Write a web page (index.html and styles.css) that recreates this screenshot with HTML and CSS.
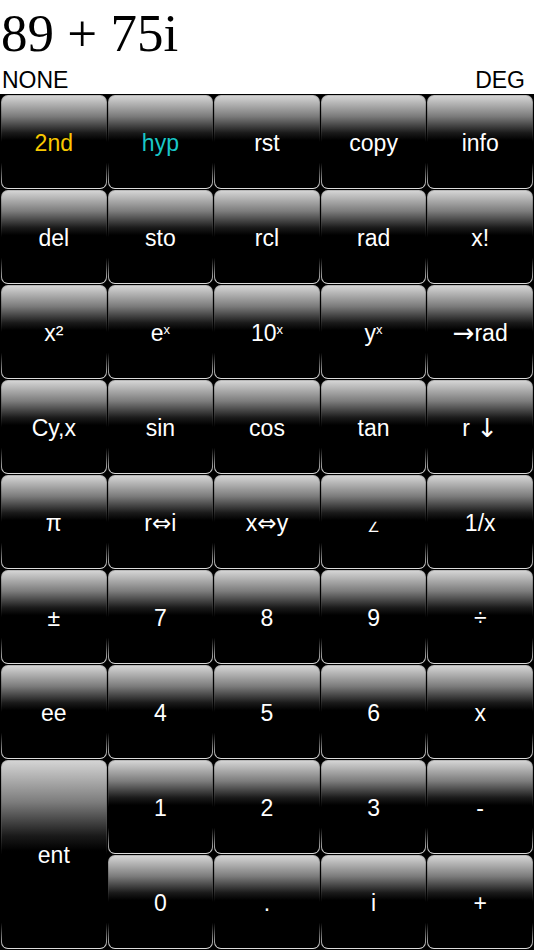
FILE: index.html
```html
<!DOCTYPE html>
<html>
<head>
<meta charset="utf-8">
<link rel="stylesheet" href="styles.css">
</head>
<body>
<div class="app">
  <div class="screen">
    <div class="display">89 + 75i</div>
    <div class="status"><span>NONE</span><span>DEG</span></div>
  </div>
  <div class="keypad">
    <div class="key"><span class="face gold">2nd</span></div>
    <div class="key"><span class="face cyan">hyp</span></div>
    <div class="key"><span class="face">rst</span></div>
    <div class="key"><span class="face">copy</span></div>
    <div class="key"><span class="face">info</span></div>

    <div class="key"><span class="face">del</span></div>
    <div class="key"><span class="face">sto</span></div>
    <div class="key"><span class="face">rcl</span></div>
    <div class="key"><span class="face">rad</span></div>
    <div class="key"><span class="face">x!</span></div>

    <div class="key"><span class="face">x²</span></div>
    <div class="key"><span class="face">e<sup>x</sup></span></div>
    <div class="key"><span class="face">10<sup>x</sup></span></div>
    <div class="key"><span class="face">y<sup>x</sup></span></div>
    <div class="key"><span class="face"><span class="sym wide">→</span>rad</span></div>

    <div class="key"><span class="face">Cy,x</span></div>
    <div class="key"><span class="face">sin</span></div>
    <div class="key"><span class="face">cos</span></div>
    <div class="key"><span class="face">tan</span></div>
    <div class="key"><span class="face">r <span class="arrow">↓</span></span></div>

    <div class="key"><span class="face">π</span></div>
    <div class="key"><span class="face">r<span class="sym">⇔</span>i</span></div>
    <div class="key"><span class="face">x<span class="sym">⇔</span>y</span></div>
    <div class="key"><span class="face"><span class="angle">∠</span></span></div>
    <div class="key"><span class="face">1/x</span></div>

    <div class="key"><span class="face">±</span></div>
    <div class="key"><span class="face">7</span></div>
    <div class="key"><span class="face">8</span></div>
    <div class="key"><span class="face">9</span></div>
    <div class="key"><span class="face">÷</span></div>

    <div class="key"><span class="face">ee</span></div>
    <div class="key"><span class="face">4</span></div>
    <div class="key"><span class="face">5</span></div>
    <div class="key"><span class="face">6</span></div>
    <div class="key"><span class="face">x</span></div>

    <div class="key tall"><span class="face">ent</span></div>
    <div class="key"><span class="face">1</span></div>
    <div class="key"><span class="face">2</span></div>
    <div class="key"><span class="face">3</span></div>
    <div class="key"><span class="face">-</span></div>

    <div class="key"><span class="face">0</span></div>
    <div class="key"><span class="face">.</span></div>
    <div class="key"><span class="face">i</span></div>
    <div class="key"><span class="face">+</span></div>
  </div>
</div>
</body>
</html>
```

FILE: styles.css
```css
html, body {
  margin: 0;
  padding: 0;
  background: #000;
}
.app {
  width: 534px;
  height: 950px;
  display: flex;
  flex-direction: column;
  overflow: hidden;
}
.screen {
  height: 94px;
  background: #fff;
  display: flex;
  flex-direction: column;
}
.display {
  font-family: "Liberation Serif", "Times New Roman", serif;
  font-size: 53px;
  line-height: 67px;
  height: 66px;
  padding-left: 1px;
  color: #000;
}
.status {
  display: flex;
  justify-content: space-between;
  font-family: "Liberation Sans", Arial, sans-serif;
  font-size: 23px;
  line-height: 28px;
  padding: 0 9px 0 2px;
  color: #000;
}
.keypad {
  flex: 1;
  display: grid;
  grid-template-columns: repeat(5, 1fr);
  grid-template-rows: repeat(9, 1fr);
  gap: 1px;
  padding: 1px;
  background: #000;
}
.key {
  border-radius: 7px;
  padding: 1px;
  background: linear-gradient(to bottom, #b8b8b8 0%, #333 38%, #000 50%, #000 72%, #e0e0e0 100%);
  display: flex;
}
.key.tall {
  grid-row: span 2;
  background: linear-gradient(to bottom, #b8b8b8 0%, #333 40%, #000 50%, #000 86%, #e0e0e0 100%);
}
.face {
  flex: 1;
  border-radius: 6px;
  background: linear-gradient(to bottom, #d4d4d4 0%, #7c7c7c 22%, #1a1a1a 40%, #000 48%, #000 100%);
  color: #fff;
  font-family: "Liberation Sans", Arial, sans-serif;
  font-size: 23px;
  display: flex;
  align-items: center;
  justify-content: center;
  white-space: pre;
  padding-top: 2px;
}
.face sup {
  font-size: 13px;
  line-height: 0;
  position: relative;
  top: -3px;
  vertical-align: baseline;
}
.gold { color: #f8c800; }
.cyan { color: #19c7c7; }
.sym {
  font-family: "DejaVu Sans", sans-serif;
  font-size: 23px;
}
.sym.wide {
  font-size: 26px;
}
.arrow {
  font-family: "DejaVu Sans", sans-serif;
  font-size: 26px;
}
.angle {
  font-family: "DejaVu Sans", sans-serif;
  font-size: 14px;
  position: relative;
  top: 4px;
}
```
